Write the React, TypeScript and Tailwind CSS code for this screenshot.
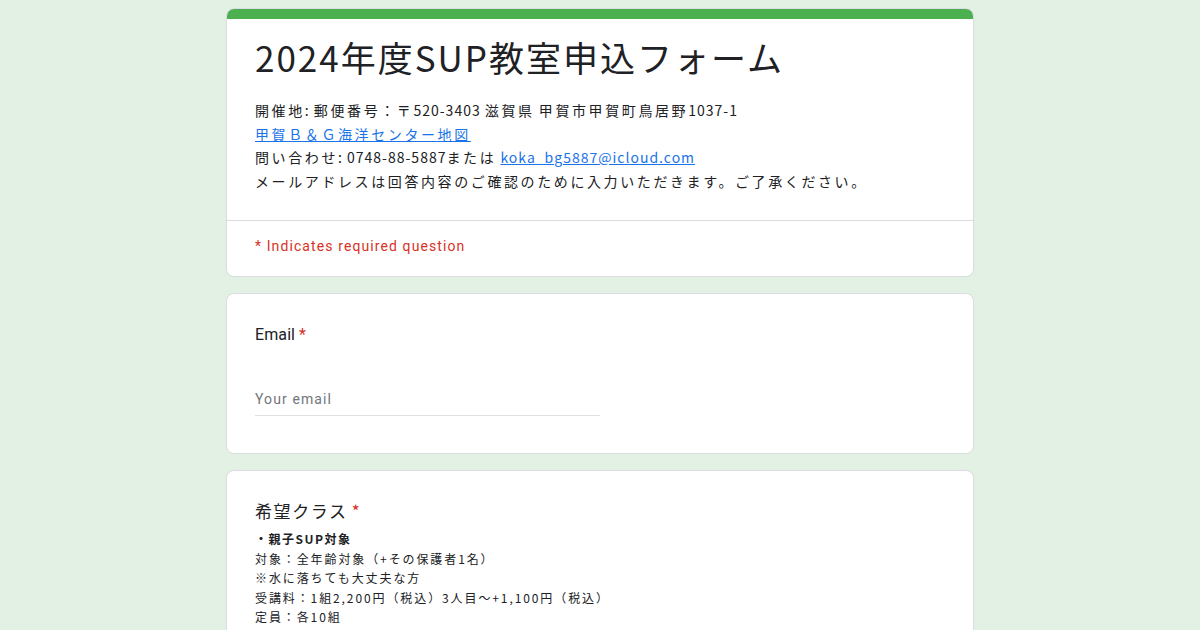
const font = "font-['Roboto','Noto_Sans_CJK_JP',sans-serif]";
const jp = "font-['Noto_Sans_CJK_JP',sans-serif]";

function Required() {
  return <span className="ml-1 text-[#d93025]">*</span>;
}

// latin runs inside the description are set tighter than the kana/kanji
function L({ children }: { children: React.ReactNode }) {
  return <span className="tracking-[1px]">{children}</span>;
}

export default function App() {
  return (
    <div className={`min-h-[630px] w-[1200px] overflow-hidden bg-[#e3f1e4] ${font}`}>
      <div className="mx-auto flex w-[748px] flex-col gap-4 pt-2">
        {/* header card */}
        <div className="overflow-hidden rounded-lg border border-[#dadce0] bg-white">
          <div className="h-[10px] bg-[#4caf50]" />
          <div className="px-[28px] pb-[27px] pt-[14px]">
            <h1 className={`${jp} text-[35px] leading-[48px] tracking-[2px] text-[#202124]`}>
              2024年度SUP教室申込フォーム
            </h1>
            <div className={`${jp} mt-[18px] text-[14px] leading-[23.5px] tracking-[2.6px] text-[#202124]`}>
              <div>
                開催地<L>: </L>郵便番号：〒<L>520-3403 </L>滋賀県<L> </L>甲賀市甲賀町鳥居野<L>1037-1</L>
              </div>
              <div>
                <a className="text-[#1a73e8] underline" href="#">
                  甲賀Ｂ＆Ｇ海洋センター地図
                </a>
              </div>
              <div>
                問い合わせ<L>: 0748-88-5887</L>または<L> </L>
                <a className="text-[#1a73e8] underline" href="#">
                  <L>koka_bg5887@icloud.com</L>
                </a>
              </div>
              <div>メールアドレスは回答内容のご確認のために入力いただきます。ご了承ください。</div>
            </div>
          </div>
          <div className="border-t border-[#dadce0] px-[28px] pb-[18px] pt-[13px] text-[14px] leading-[24px] tracking-[1.1px] text-[#d93025]">
            * Indicates required question
          </div>
        </div>

        {/* email card */}
        <div className="rounded-lg border border-[#dadce0] bg-white px-[28px] pb-[37px] pt-[29px]">
          <div className="text-[16px] leading-[24px] tracking-[0.1px] text-[#202124]">
            Email
            <Required />
          </div>
          <div className="mt-[40px] w-[345px] border-b border-[#e0e0e0] pb-[4px] text-[14px] leading-[24px] tracking-[1.1px] text-[#70757a]">
            Your email
          </div>
        </div>

        {/* class card */}
        <div className="rounded-lg border border-[#dadce0] bg-white px-[28px] pb-6 pt-[28px]">
          <div className={`${jp} text-[17px] leading-[24px] tracking-[1.6px] text-[#202124]`}>
            希望クラス
            <Required />
          </div>
          <div className={`${jp} mt-[6px] text-[12px] leading-[19.5px] tracking-[1.9px] text-[#202124]`}>
            <div className="font-bold tracking-[1.5px]">・親子SUP対象</div>
            <div>対象：全年齢対象（+その保護者1名）</div>
            <div>※水に落ちても大丈夫な方</div>
            <div>受講料：1組2,200円（税込）3人目～+1,100円（税込）</div>
            <div>定員：各10組</div>
          </div>
        </div>
      </div>
    </div>
  );
}
